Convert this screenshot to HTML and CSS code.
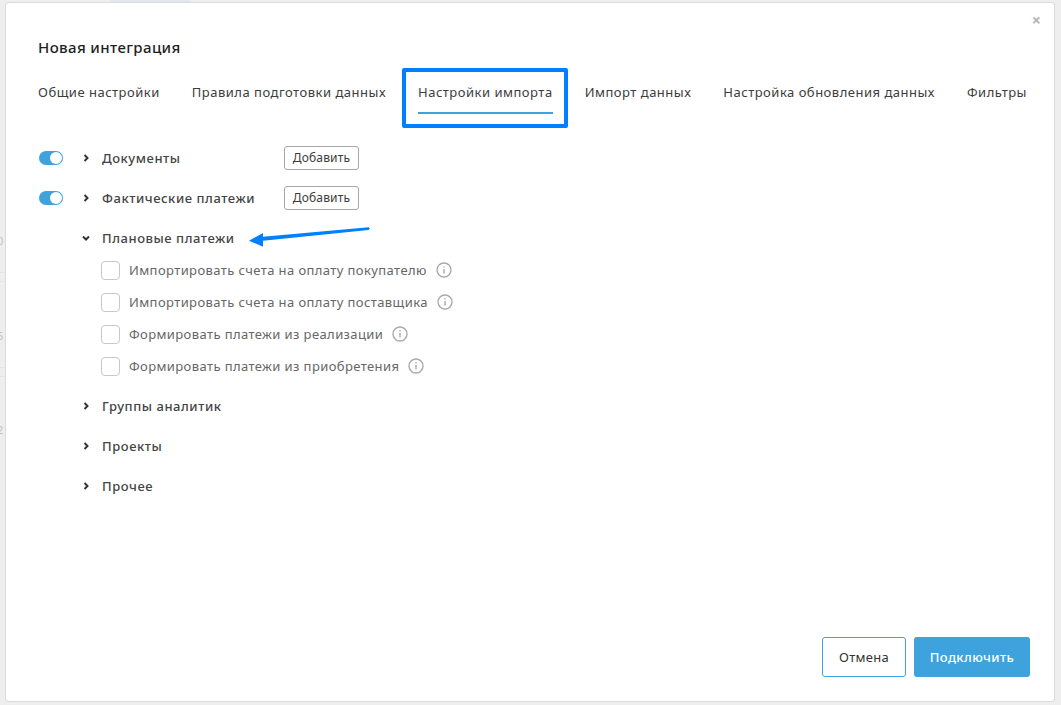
FILE: index.html
```html
<!DOCTYPE html>
<html lang="ru">
<head>
<meta charset="utf-8">
<title>Новая интеграция</title>
<link rel="stylesheet" href="styles.css">
</head>
<body>
<div class="backdrop-marks">
  <span class="mark mark-a">0</span>
  <span class="mark mark-b">5</span>
  <span class="mark mark-c">2</span>
  <i class="rule rule-a"></i>
  <i class="rule rule-b"></i>
  <i class="rule rule-c"></i>
  <i class="rule rule-d"></i>
</div>
<div class="top-tab"></div>
<main class="modal">
  <button class="close" aria-label="Закрыть">×</button>
  <h1 class="title">Новая интеграция</h1>
  <nav class="tabs">
    <a class="tab">Общие настройки</a>
    <a class="tab">Правила подготовки данных</a>
    <a class="tab active">Настройки импорта</a>
    <a class="tab">Импорт данных</a>
    <a class="tab">Настройка обновления данных</a>
    <a class="tab">Фильтры</a>
  </nav>
  <section class="groups">
    <div class="group">
      <span class="toggle"></span>
      <svg class="chev" viewBox="0 0 8 8"><path d="M2.500 1 5.500 4 2.500 7"/></svg>
      <span class="group-name wide">Документы</span>
      <button class="add">Добавить</button>
    </div>
    <div class="group">
      <span class="toggle"></span>
      <svg class="chev" viewBox="0 0 8 8"><path d="M2.500 1 5.500 4 2.500 7"/></svg>
      <span class="group-name wide">Фактические платежи</span>
      <button class="add">Добавить</button>
    </div>
    <div class="group no-toggle">
      <svg class="chev" viewBox="0 0 8 8"><path d="M1 2.500 4 5.500 7 2.500"/></svg>
      <span class="group-name">Плановые платежи</span>
    </div>
    <ul class="checks">
      <li class="check"><span class="box"></span><span>Импортировать счета на оплату покупателю</span><svg class="info" viewBox="0 0 16 16"><circle cx="8" cy="8" r="7"/><path d="M8 7v4.600M8 4.200v1.400"/></svg></li>
      <li class="check"><span class="box"></span><span>Импортировать счета на оплату поставщика</span><svg class="info" viewBox="0 0 16 16"><circle cx="8" cy="8" r="7"/><path d="M8 7v4.600M8 4.200v1.400"/></svg></li>
      <li class="check"><span class="box"></span><span>Формировать платежи из реализации</span><svg class="info" viewBox="0 0 16 16"><circle cx="8" cy="8" r="7"/><path d="M8 7v4.600M8 4.200v1.400"/></svg></li>
      <li class="check"><span class="box"></span><span>Формировать платежи из приобретения</span><svg class="info" viewBox="0 0 16 16"><circle cx="8" cy="8" r="7"/><path d="M8 7v4.600M8 4.200v1.400"/></svg></li>
    </ul>
    <div class="group no-toggle">
      <svg class="chev" viewBox="0 0 8 8"><path d="M2.500 1 5.500 4 2.500 7"/></svg>
      <span class="group-name">Группы аналитик</span>
    </div>
    <div class="group no-toggle">
      <svg class="chev" viewBox="0 0 8 8"><path d="M2.500 1 5.500 4 2.500 7"/></svg>
      <span class="group-name">Проекты</span>
    </div>
    <div class="group no-toggle">
      <svg class="chev" viewBox="0 0 8 8"><path d="M2.500 1 5.500 4 2.500 7"/></svg>
      <span class="group-name">Прочее</span>
    </div>
  </section>
  <footer class="footer">
    <button class="btn btn-cancel">Отмена</button>
    <button class="btn btn-primary">Подключить</button>
  </footer>
</main>
<div class="highlight"></div>
<svg class="arrow" viewBox="0 0 125 20" width="125" height="20"><path class="arrow-shape" d="M1 13.700 15 6 15 9.700 120.500 .3 122 1.500 120.500 3 15 13.700 15 19.700Z"/></svg>
</body>
</html>
```
FILE: styles.css
```css
* { box-sizing: border-box; }
html, body { height: 100%; }
body {
  margin: 0;
  height: 705px;
  overflow: hidden;
  background: #eeeeee;
  padding: 3px 7px 4px 6px;
  font-family: "Noto Sans", "Liberation Sans", sans-serif;
  color: #3c3c3c;
}
.backdrop-marks { position: absolute; left: 0; top: 0; width: 6px; height: 705px; overflow: hidden; }
.mark { position: absolute; left: -3px; font-size: 11px; color: #c4c4c4; }
.mark-a { top: 233px; }
.mark-b { top: 328px; }
.mark-c { top: 422px; }
.rule { position: absolute; left: 0; width: 6px; height: 1px; background: #e4e4e4; }
.rule-a { top: 272px; }
.rule-b { top: 281px; }
.rule-c { top: 367px; }
.rule-d { top: 376px; }
.top-tab { position: absolute; left: 110px; top: 0; width: 81px; height: 2px; background: #e3e8ee; }
.modal {
  position: relative;
  height: 698px;
  background: #fff;
  border-radius: 3px;
  box-shadow: 0 0 0 1px #dcdcdc;
  padding: 35px 24px 24px 32px;
  display: flex;
  flex-direction: column;
}
.close {
  position: absolute;
  top: 8px;
  right: 13px;
  border: 0;
  padding: 0;
  background: none;
  font: 700 16px/18px "Noto Sans", sans-serif;
  color: #b5b5b5;
}
.title {
  margin: 0;
  font-size: 15px;
  line-height: 18px;
  font-weight: 500;
  letter-spacing: .38px;
  color: #1f1f1f;
}
.tabs {
  display: flex;
  gap: 32px;
  margin-top: 27px;
  height: 48px;
  font-size: 13px;
  line-height: 18px;
  letter-spacing: .5px;
  white-space: nowrap;
}
.tab { height: 31px; color: #3c3c3c; }
.tab.active { border-bottom: 2px solid #3ea3dc; }
.groups { margin-top: 7px; flex: 1; }
.group {
  display: flex;
  align-items: center;
  height: 40px;
  padding-left: 1px;
  font-size: 13px;
  font-weight: 500;
  letter-spacing: .55px;
}
.no-toggle { padding-left: 44px; }
.toggle {
  position: relative;
  width: 24px;
  height: 14px;
  margin-right: 19px;
  border-radius: 7px;
  background: #3ea3dc;
}
.toggle::after {
  content: "";
  position: absolute;
  right: 1px;
  top: 1px;
  width: 12px;
  height: 12px;
  border-radius: 50%;
  background: #fff;
}
.chev {
  width: 8px;
  height: 8px;
  margin-right: 12px;
  fill: none;
  stroke: #333;
  stroke-width: 2;
}
.group-name { color: #444; }
.wide { min-width: 182px; }
.add {
  width: 75px;
  height: 24px;
  padding: 0;
  border: 1px solid #a8a8a8;
  border-radius: 3px;
  background: #fff;
  font: 400 12px/20px "Noto Sans", sans-serif;
  letter-spacing: .15px;
  color: #3c3c3c;
}
.checks { list-style: none; margin: -4px 0 4px; padding: 0 0 0 63px; }
.check {
  display: flex;
  align-items: center;
  height: 32px;
  font-size: 13px;
  letter-spacing: .4px;
  color: #666;
}
.box {
  width: 19px;
  height: 19px;
  margin-right: 9px;
  border: 1.500px solid #c8c8c8;
  border-radius: 4px;
}
.info {
  width: 16px;
  height: 16px;
  margin-left: 9px;
  fill: none;
  stroke: #aaa;
  stroke-width: 1.400;
}
.footer { display: flex; justify-content: flex-end; gap: 8px; }
.btn {
  height: 40px;
  border-radius: 3px;
  font: 400 13px/18px "Noto Sans", sans-serif;
}
.btn-cancel { width: 84px; border: 1px solid #3ea3dc; background: #fff; color: #333; letter-spacing: .3px; }
.btn-primary { width: 116px; border: 0; background: #3ea3dc; color: #fff; font-weight: 500; letter-spacing: .4px; }
.highlight {
  position: absolute;
  left: 402px;
  top: 68px;
  width: 166px;
  height: 60px;
  border: 4px solid #0080ff;
  border-radius: 2px;
}
.arrow { position: absolute; left: 248px; top: 227px; }
.arrow-shape { fill: #0080ff; }
```
